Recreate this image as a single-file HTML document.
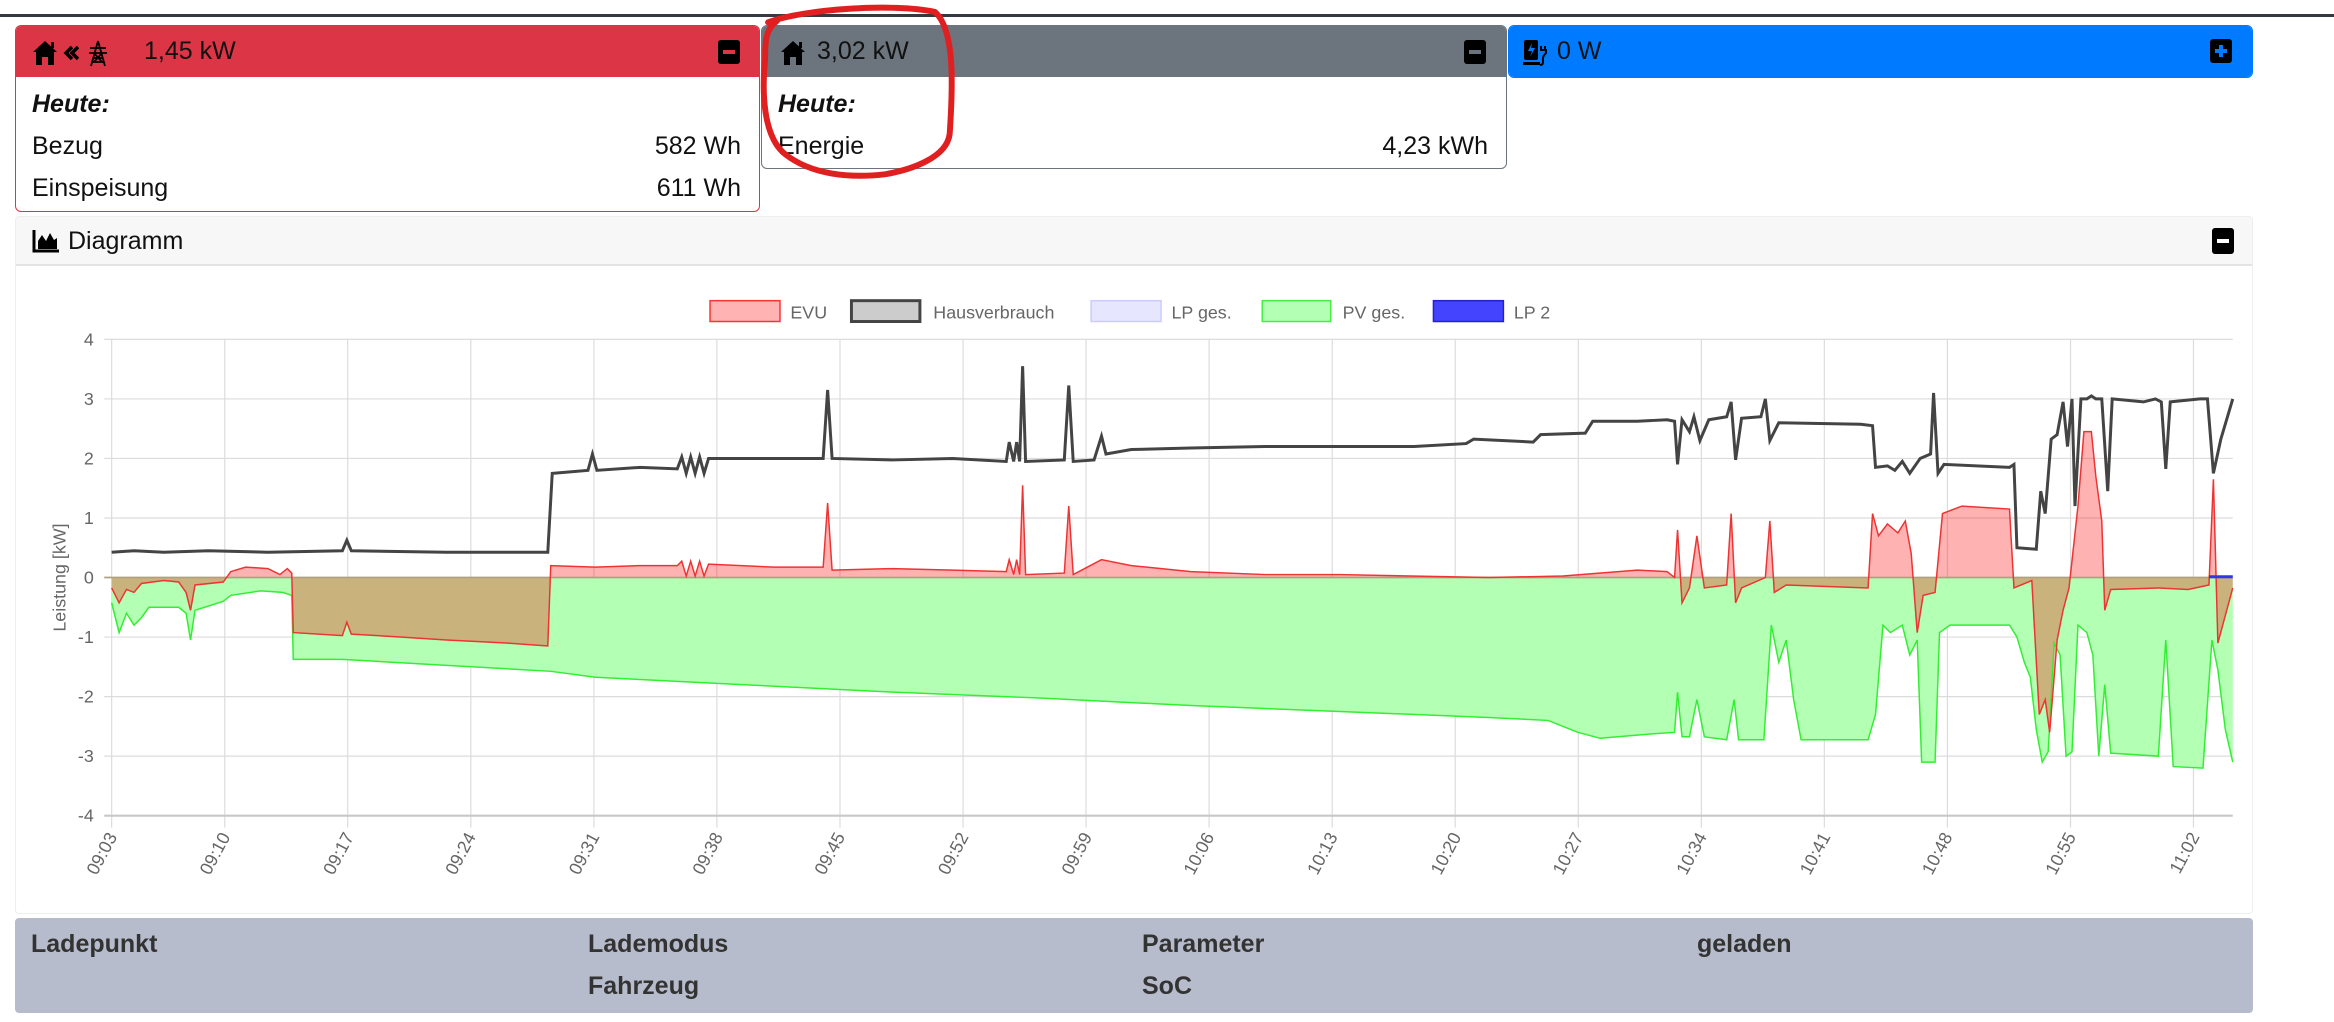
<!DOCTYPE html>
<html><head><meta charset="utf-8">
<style>
*{box-sizing:border-box;margin:0;padding:0}
html,body{width:2334px;height:1022px;overflow:hidden;background:#fff;font-family:"Liberation Sans",Arial,sans-serif;font-size:25px;color:#111}
.abs{position:absolute}
.card{position:absolute;border-radius:6px;overflow:hidden;background:#fff}
.hdr{position:absolute;left:0;right:0;top:0;height:51px;line-height:51px;color:#111}
.row{position:absolute;left:16px;right:18px;height:42px;line-height:42px}
.row .r{position:absolute;right:0;top:0}
.bi{font-weight:bold;font-style:italic}
.tb{position:absolute;font-weight:bold;color:#333;font-size:25px}
</style></head><body>
<div class="abs" style="left:0;top:14px;width:2334px;height:3px;background:#343a40"></div>

<!-- red card -->
<div class="card" style="left:15px;top:25px;width:745px;height:187px;border:1px solid #dc3545">
 <div class="hdr" style="background:#dc3545;height:51px">
  <svg class="abs" style="left:16px;top:13px" width="100" height="28" viewBox="0 0 100 28">
   <path d="M1 13 L13 2 L25 13 L22 13 L22 26 L16 26 L16 18 L10 18 L10 26 L4 26 L4 13 Z" fill="#000"/>
   <rect x="19" y="3" width="3" height="6" fill="#000"/>
   <path d="M40 8 L34 14 L40 20 M46 8 L40 14 L46 20" stroke="#000" stroke-width="3.5" fill="none"/>
   <path d="M66 2 L59 27 M66 2 L73 27 M58 9 L74 9 M57 14 L75 14 M61 19 L71 19 M60 23 L72 23 M62 14 L70 23 M70 14 L62 23" stroke="#000" stroke-width="1.8" fill="none"/>
  </svg>
  <span class="abs" style="left:128px;top:0">1,45 kW</span>
  <svg class="abs" style="left:702px;top:14px" width="22" height="24"><rect width="22" height="24" rx="3" fill="#000"/><rect x="5" y="10" width="12" height="4" fill="#dc3545"/></svg>
 </div>
 <div class="row bi" style="top:57px">Heute:</div>
 <div class="row" style="top:99px">Bezug<span class="r">582 Wh</span></div>
 <div class="row" style="top:141px">Einspeisung<span class="r">611 Wh</span></div>
</div>

<!-- gray card -->
<div class="card" style="left:761px;top:25px;width:746px;height:144px;border:1px solid #6c757d">
 <div class="hdr" style="background:#6c757d">
  <svg class="abs" style="left:18px;top:13px" width="28" height="28"><path d="M1 13 L13 2 L25 13 L22 13 L22 26 L16 26 L16 18 L10 18 L10 26 L4 26 L4 13 Z" fill="#000"/><rect x="19" y="3" width="3" height="6" fill="#000"/></svg>
  <span class="abs" style="left:55px;top:0">3,02 kW</span>
  <svg class="abs" style="left:702px;top:14px" width="22" height="24"><rect width="22" height="24" rx="3" fill="#000"/><rect x="5" y="10" width="12" height="4" fill="#6c757d"/></svg>
 </div>
 <div class="row bi" style="top:57px">Heute:</div>
 <div class="row" style="top:99px">Energie<span class="r">4,23 kWh</span></div>
</div>

<!-- blue card -->
<div class="card" style="left:1508px;top:25px;width:745px;height:53px;border:1px solid #007bff">
 <div class="hdr" style="background:#007bff">
  <svg class="abs" style="left:14px;top:12px" width="30" height="30" viewBox="0 0 30 30">
   <rect x="1" y="2" width="14" height="20" rx="2" fill="#000"/><rect x="0" y="24" width="17" height="3" fill="#000"/>
   <path d="M9 5 L5 13 L9 13 L7 19 L12 10 L8 10 Z" fill="#007bff"/>
   <path d="M18 8 L18 12 M22 8 L22 12 M17 12 L23 12 L23 15 Q20 18 20 20 L20 24 Q20 27 17 27" stroke="#000" stroke-width="2" fill="none"/>
  </svg>
  <span class="abs" style="left:48px;top:0">0 W</span>
  <svg class="abs" style="left:701px;top:13px" width="22" height="24"><rect width="22" height="24" rx="3" fill="#000"/><rect x="5" y="10" width="12" height="4" fill="#007bff"/><rect x="9" y="6" width="4" height="12" fill="#007bff"/></svg>
 </div>
</div>

<!-- Diagramm card -->
<div class="card" style="left:15px;top:216px;width:2238px;height:698px;border:1px solid #eceef0;border-radius:4px">
 <div class="abs" style="left:0;top:0;right:0;height:49px;background:#f7f7f8;border-bottom:2px solid #e2e3e5"></div>
 <svg class="abs" style="left:16px;top:12px" width="28" height="24"><path d="M2 1 L2 22 L27 22" stroke="#000" stroke-width="3" fill="none"/><path d="M6 20 L6 12 L10 6 L14 12 L18 4 L22 11 L25 9 L25 20 Z" fill="#000"/></svg>
 <span class="abs" style="left:52px;top:10px">Diagramm</span>
 <svg class="abs" style="left:2196px;top:11px" width="22" height="26"><rect width="22" height="26" rx="3" fill="#000"/><rect x="5" y="11" width="12" height="4" fill="#fff"/></svg>
</div>

<!-- bottom table -->
<div class="abs" style="left:15px;top:918px;width:2238px;height:95px;background:#b6bccb;border-radius:4px"></div>
<div class="tb" style="left:31px;top:930px">Ladepunkt</div>
<div class="tb" style="left:588px;top:930px">Lademodus</div>
<div class="tb" style="left:588px;top:972px">Fahrzeug</div>
<div class="tb" style="left:1142px;top:930px">Parameter</div>
<div class="tb" style="left:1142px;top:972px">SoC</div>
<div class="tb" style="left:1697px;top:930px">geladen</div>

<!-- chart + annotation in display coordinates -->
<svg class="abs" style="left:0;top:0" width="2334" height="1022" viewBox="0 0 1568 686.6">
 <g stroke="#dcdcdc" stroke-width="0.8">
  <line x1="70" y1="228" x2="1500" y2="228"/><line x1="70" y1="268" x2="1500" y2="268"/><line x1="70" y1="308" x2="1500" y2="308"/><line x1="70" y1="348" x2="1500" y2="348"/><line x1="70" y1="428" x2="1500" y2="428"/><line x1="70" y1="468" x2="1500" y2="468"/><line x1="70" y1="508" x2="1500" y2="508"/>
  <line x1="75" y1="228" x2="75" y2="556"/><line x1="151" y1="228" x2="151" y2="556"/><line x1="233.6" y1="228" x2="233.6" y2="556"/><line x1="316.3" y1="228" x2="316.3" y2="556"/><line x1="399" y1="228" x2="399" y2="556"/><line x1="481.6" y1="228" x2="481.6" y2="556"/><line x1="564.3" y1="228" x2="564.3" y2="556"/><line x1="647" y1="228" x2="647" y2="556"/><line x1="729.6" y1="228" x2="729.6" y2="556"/><line x1="812.3" y1="228" x2="812.3" y2="556"/><line x1="895" y1="228" x2="895" y2="556"/><line x1="977.6" y1="228" x2="977.6" y2="556"/><line x1="1060.3" y1="228" x2="1060.3" y2="556"/><line x1="1143" y1="228" x2="1143" y2="556"/><line x1="1225.6" y1="228" x2="1225.6" y2="556"/><line x1="1308.3" y1="228" x2="1308.3" y2="556"/><line x1="1391" y1="228" x2="1391" y2="556"/><line x1="1473.6" y1="228" x2="1473.6" y2="556"/>
 </g>
 <line x1="70" y1="548" x2="1500" y2="548" stroke="#c8c8c8" stroke-width="1.4"/>
 <path d="M75,405 L80,425 L85,412 L90,420 L95,415 L100,408 L120,408 L125,412 L128,430 L131,410 L150,404 L155,400 L175,397 L190,398 L196,400 L197,443 L230,443 L300,447 L370,451 L400,455 L500,460 L600,465 L700,469 L800,474 L900,478 L1000,482 L1040,484 L1060,492 L1075,496 L1110,493 L1125,492 L1127,465 L1130,495 L1135,495 L1140,470 L1145,495 L1160,497 L1165,470 L1168,497 L1185,497 L1190,420 L1195,445 L1200,430 L1205,470 L1210,497 L1255,497 L1260,480 L1265,420 L1270,425 L1278,420 L1283,440 L1288,430 L1291,512 L1300,512 L1303,425 L1310,420 L1350,420 L1355,428 L1360,445 L1364,455 L1368,490 L1372,512 L1376,505 L1380,432 L1384,440 L1388,508 L1392,505 L1396,420 L1402,425 L1406,440 L1410,508 L1414,460 L1418,506 L1450,508 L1455,430 L1460,515 L1480,516 L1486,430 L1490,450 L1495,490 L1500,512 L1500,388 L75,388 Z" fill="#b3ffb3" stroke="none"/>
 <path d="M75,395 L80,405 L85,396 L90,398 L95,392 L110,390 L120,391 L125,398 L128,410 L131,393 L150,391 L155,384 L165,381 L180,382 L188,386 L193,382 L196,385 L197,425 L230,427 L233,418 L236,426 L270,428 L300,430 L340,432 L368,434 L370,380 L400,381 L430,380 L455,380 L458,377 L461,387 L464,377 L467,387 L470,377 L473,387 L476,379 L520,381 L553,381 L556,338 L559,383 L600,382 L640,383 L676,384 L678,376 L681,386 L683,376 L685,386 L687,326 L689,386 L715,385 L718,340 L721,386 L740,376 L760,380 L800,384 L850,386 L900,386 L1000,388 L1050,387 L1100,383 L1120,384 L1125,388 L1127,356 L1130,405 L1135,395 L1140,360 L1145,395 L1160,393 L1163,345 L1166,405 L1170,395 L1186,388 L1189,350 L1192,398 L1200,393 L1255,395 L1258,345 L1262,360 L1268,352 L1275,358 L1280,350 L1284,372 L1288,425 L1292,400 L1300,398 L1305,345 L1318,340 L1350,342 L1353,395 L1365,390 L1370,480 L1374,470 L1377,492 L1382,430 L1386,410 L1390,395 L1396,340 L1400,290 L1405,290 L1408,320 L1412,350 L1414,410 L1418,396 L1450,395 L1470,396 L1484,393 L1487,322 L1490,432 L1500,395 L1500,388 L75,388 Z" fill="rgba(255,0,0,0.3)" stroke="none"/>
 <line x1="70" y1="388" x2="1500" y2="388" stroke="#b0a080" stroke-width="1.2"/>
 <path d="M75,405 L80,425 L85,412 L90,420 L95,415 L100,408 L120,408 L125,412 L128,430 L131,410 L150,404 L155,400 L175,397 L190,398 L196,400 L197,443 L230,443 L300,447 L370,451 L400,455 L500,460 L600,465 L700,469 L800,474 L900,478 L1000,482 L1040,484 L1060,492 L1075,496 L1110,493 L1125,492 L1127,465 L1130,495 L1135,495 L1140,470 L1145,495 L1160,497 L1165,470 L1168,497 L1185,497 L1190,420 L1195,445 L1200,430 L1205,470 L1210,497 L1255,497 L1260,480 L1265,420 L1270,425 L1278,420 L1283,440 L1288,430 L1291,512 L1300,512 L1303,425 L1310,420 L1350,420 L1355,428 L1360,445 L1364,455 L1368,490 L1372,512 L1376,505 L1380,432 L1384,440 L1388,508 L1392,505 L1396,420 L1402,425 L1406,440 L1410,508 L1414,460 L1418,506 L1450,508 L1455,430 L1460,515 L1480,516 L1486,430 L1490,450 L1495,490 L1500,512" fill="none" stroke="#33ee33" stroke-width="1"/>
 <path d="M75,395 L80,405 L85,396 L90,398 L95,392 L110,390 L120,391 L125,398 L128,410 L131,393 L150,391 L155,384 L165,381 L180,382 L188,386 L193,382 L196,385 L197,425 L230,427 L233,418 L236,426 L270,428 L300,430 L340,432 L368,434 L370,380 L400,381 L430,380 L455,380 L458,377 L461,387 L464,377 L467,387 L470,377 L473,387 L476,379 L520,381 L553,381 L556,338 L559,383 L600,382 L640,383 L676,384 L678,376 L681,386 L683,376 L685,386 L687,326 L689,386 L715,385 L718,340 L721,386 L740,376 L760,380 L800,384 L850,386 L900,386 L1000,388 L1050,387 L1100,383 L1120,384 L1125,388 L1127,356 L1130,405 L1135,395 L1140,360 L1145,395 L1160,393 L1163,345 L1166,405 L1170,395 L1186,388 L1189,350 L1192,398 L1200,393 L1255,395 L1258,345 L1262,360 L1268,352 L1275,358 L1280,350 L1284,372 L1288,425 L1292,400 L1300,398 L1305,345 L1318,340 L1350,342 L1353,395 L1365,390 L1370,480 L1374,470 L1377,492 L1382,430 L1386,410 L1390,395 L1396,340 L1400,290 L1405,290 L1408,320 L1412,350 L1414,410 L1418,396 L1450,395 L1470,396 L1484,393 L1487,322 L1490,432 L1500,395" fill="none" stroke="#ee3333" stroke-width="1"/>
 <line x1="1484" y1="387.5" x2="1500" y2="387.5" stroke="#3333ee" stroke-width="2"/>
 <path d="M75,371 L90,370 L110,371 L140,370 L180,371 L230,370 L233,363 L236,370 L300,371 L368,371 L371,318 L395,316 L398,305 L401,316 L430,314 L455,315 L458,307 L461,318 L464,307 L467,318 L470,307 L473,318 L476,308 L520,308 L553,308 L556,262 L559,308 L600,309 L640,308 L676,310 L678,297 L681,310 L683,297 L685,310 L687,246 L689,310 L715,309 L718,259 L721,310 L735,309 L740,293 L743,305 L760,302 L800,301 L850,300 L900,300 L950,300 L985,298 L990,295 L1030,297 L1035,292 L1065,291 L1070,283 L1100,283 L1120,282 L1125,283 L1127,312 L1130,282 L1135,290 L1138,280 L1142,296 L1148,282 L1160,280 L1163,270 L1166,309 L1170,281 L1183,280 L1186,268 L1189,296 L1195,284 L1250,285 L1258,286 L1260,314 L1268,313 L1273,316 L1278,310 L1283,318 L1290,308 L1297,305 L1299,264 L1302,318 L1306,312 L1350,314 L1353,312 L1355,368 L1368,369 L1371,330 L1374,345 L1378,295 L1382,292 L1386,270 L1389,300 L1392,268 L1394,340 L1398,268 L1402,268 L1405,266 L1408,268 L1412,268 L1416,330 L1419,268 L1440,270 L1448,268 L1452,270 L1455,315 L1458,270 L1478,268 L1483,268 L1487,318 L1492,295 L1500,268" fill="none" stroke="#444" stroke-width="2"/>
 <g font-family="Liberation Sans, Arial, sans-serif" font-size="12" fill="#666">
  <g text-anchor="end"><text x="63" y="232">4</text><text x="63" y="272">3</text><text x="63" y="312">2</text><text x="63" y="352">1</text><text x="63" y="392">0</text><text x="63" y="432">-1</text><text x="63" y="472">-2</text><text x="63" y="512">-3</text><text x="63" y="552">-4</text></g>
  <text transform="translate(44,388) rotate(-90)" text-anchor="middle">Leistung [kW]</text>
  <g text-anchor="end">
   <text transform="translate(79,562) rotate(-62)">09:03</text><text transform="translate(155,562) rotate(-62)">09:10</text><text transform="translate(238,562) rotate(-62)">09:17</text><text transform="translate(320,562) rotate(-62)">09:24</text><text transform="translate(403,562) rotate(-62)">09:31</text><text transform="translate(486,562) rotate(-62)">09:38</text><text transform="translate(568,562) rotate(-62)">09:45</text><text transform="translate(651,562) rotate(-62)">09:52</text><text transform="translate(734,562) rotate(-62)">09:59</text><text transform="translate(816,562) rotate(-62)">10:06</text><text transform="translate(899,562) rotate(-62)">10:13</text><text transform="translate(982,562) rotate(-62)">10:20</text><text transform="translate(1064,562) rotate(-62)">10:27</text><text transform="translate(1147,562) rotate(-62)">10:34</text><text transform="translate(1230,562) rotate(-62)">10:41</text><text transform="translate(1312,562) rotate(-62)">10:48</text><text transform="translate(1395,562) rotate(-62)">10:55</text><text transform="translate(1478,562) rotate(-62)">11:02</text>
  </g>
  <rect x="477" y="202" width="47" height="14" fill="#ffb3b3" stroke="#f33" stroke-width="1"/><text x="531" y="214">EVU</text>
  <rect x="572" y="202" width="46" height="14" fill="#ccc" stroke="#444" stroke-width="2"/><text x="627" y="214">Hausverbrauch</text>
  <rect x="733" y="202" width="47" height="14" fill="#e6e6ff" stroke="#ccf" stroke-width="1"/><text x="787" y="214">LP ges.</text>
  <rect x="848" y="202" width="46" height="14" fill="#b3ffb3" stroke="#4e4" stroke-width="1"/><text x="902" y="214">PV ges.</text>
  <rect x="963" y="202" width="47" height="14" fill="#4444ff" stroke="#22c" stroke-width="1"/><text x="1017" y="214">LP 2</text>
 </g>
 <path d="M516,15 C540,6 600,2 628,8 C642,20 640,60 638,90 C636,106 612,114 595,117 C570,120 545,117 528,104 C512,92 512,60 514,40 C514,28 514,20 522,14" fill="none" stroke="#e02020" stroke-width="4" stroke-linecap="round"/>
</svg>
</body></html>
